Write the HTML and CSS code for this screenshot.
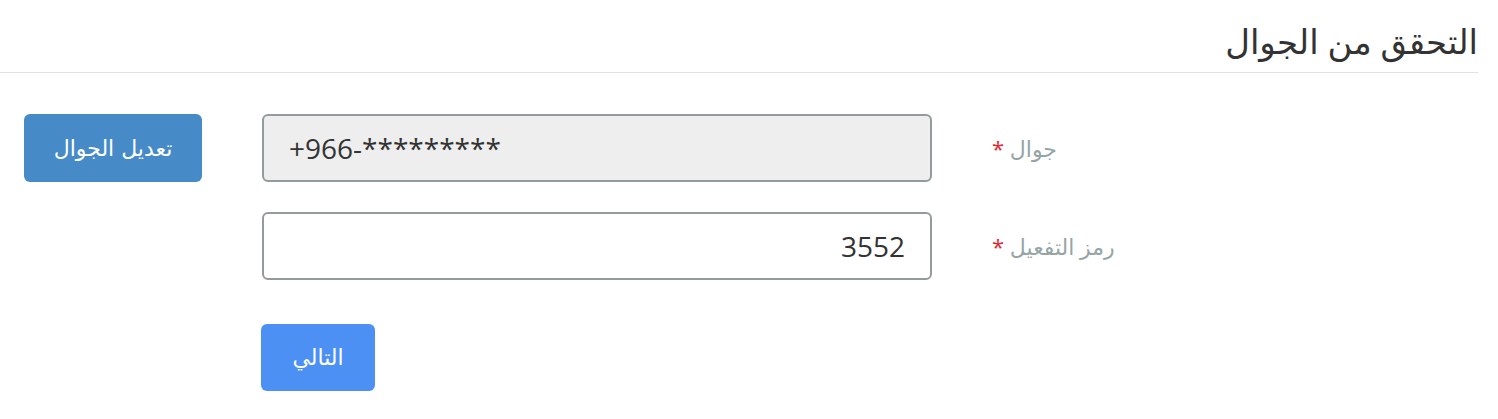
FILE: index.html
```html
<!DOCTYPE html>
<html lang="ar" dir="rtl">
<head>
  <meta charset="UTF-8">
  <title>التحقق من الجوال</title>
  <link rel="stylesheet" href="styles.css">
</head>
<body>
<div class="page">
  <h1 class="title">التحقق من الجوال</h1>

  <form class="verify-form">
    <label class="field-label" for="mobile">جوال <span class="req">*</span></label>
    <input class="field-input is-readonly" id="mobile" type="text" dir="ltr" value="+966-*********" readonly>
    <button type="button" class="btn btn-edit">تعديل الجوال</button>

    <label class="field-label" for="code">رمز التفعيل <span class="req">*</span></label>
    <input class="field-input" id="code" type="text" value="3552">
    <span></span>

    <span></span>
    <div class="actions">
      <button type="submit" class="btn btn-next">التالي</button>
    </div>
  </form>
</div>
</body>
</html>
```

FILE: styles.css
```css
body {
    margin: 0;
    background: #fff;
    font-family: "Open Sans", "DejaVu Sans", sans-serif;
    color: #333;
}

.title {
    box-sizing: border-box;
    height: 73px;
    margin: 0 20px 0 0;
    padding: 19px 0 0 0;
    font-size: 34px;
    line-height: 44px;
    font-weight: normal;
    color: #333;
    border-bottom: 1px solid #e1e1e1;
}

.verify-form {
    display: grid;
    grid-template-columns: 486px 670px 178px;
    column-gap: 60px;
    row-gap: 30px;
    padding: 41px 20px 0 24px;
    align-items: center;
}

.field-label {
    text-align: left;
    font-size: 22px;
    color: #95a5a6;
}

.req {
    color: #e3262f;
}

.field-input {
    box-sizing: border-box;
    width: 100%;
    height: 68px;
    border: 2px solid #959b9c;
    border-radius: 6px;
    padding: 0 25px;
    font-family: "Open Sans", sans-serif;
    font-size: 28px;
    color: #333;
    background: #fff;
    outline: none;
}

.field-input.is-readonly {
    background: #eeeeee;
    border-color: #939c9c;
    text-align: left;
}

.btn {
    border: 0;
    border-radius: 6px;
    color: #fff;
    font-family: "DejaVu Sans", sans-serif;
    font-size: 22px;
    cursor: pointer;
}

.btn-edit {
    width: 178px;
    height: 68px;
    background: #468bc7;
}

.actions {
    display: flex;
    justify-content: flex-end;
    padding-top: 14px;
}

.btn-next {
    width: 114px;
    height: 67px;
    margin-left: -1px;
    background: #4d90f4;
}
```
